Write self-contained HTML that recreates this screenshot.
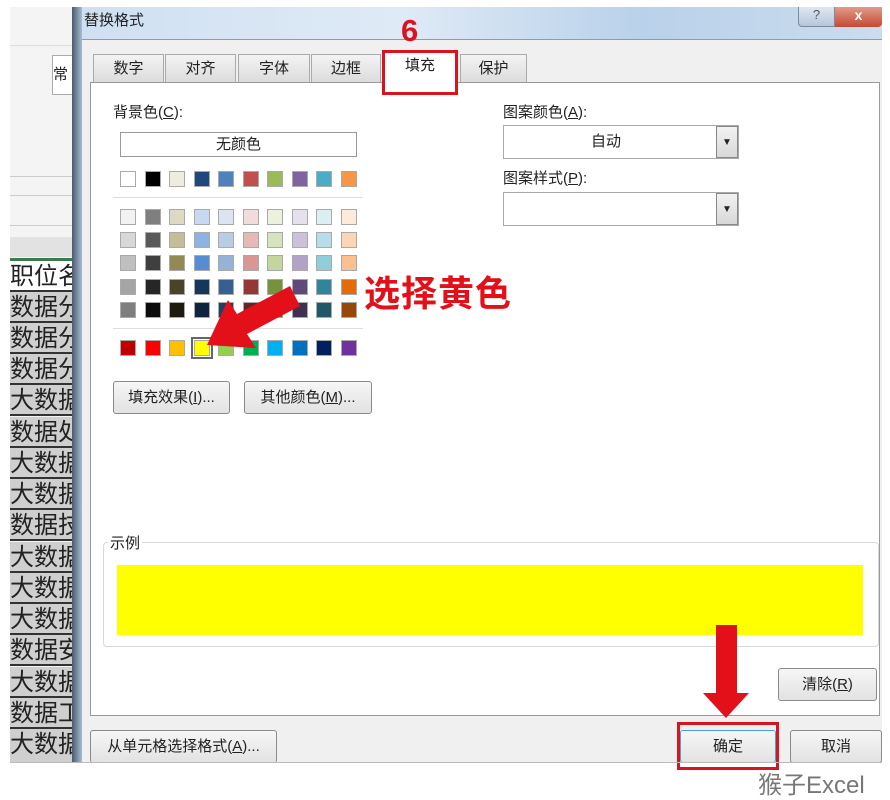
<!DOCTYPE html>
<html><head><meta charset="utf-8"><style>
*{margin:0;padding:0;box-sizing:border-box}
body{width:890px;height:799px;background:#fff;position:relative;overflow:hidden;font-family:"Liberation Sans","Noto Sans CJK SC",sans-serif;font-size:15px;color:#222}
.a{position:absolute}
.sw{position:absolute;width:16px;height:16px;border:1px solid #aaa}
.btn{position:absolute;border:1px solid #8a8a8a;border-radius:3px;background:linear-gradient(#f6f6f6,#e2e2e2);text-align:center;font-size:15px}
.tab{position:absolute;top:54px;height:28px;border:1px solid #aaa;border-bottom:none;background:linear-gradient(#f3f3f3,#dcdcdc);text-align:center;line-height:28px;font-size:15px}
.row{position:absolute;left:10px;width:62px;height:31px;font-size:24px;line-height:31px;overflow:hidden;white-space:nowrap;border-bottom:2px solid #333;background:#cfcfcf}
</style></head><body>
<div class="a" style="left:10px;top:7px;width:65px;height:755px;background:#f4f4f4"></div>
<div class="a" style="left:10px;top:45px;width:62px;height:1px;background:#ddd"></div>
<div class="a" style="left:52px;top:55px;width:22px;height:40px;border:1px solid #aaa;background:#fff;font-size:15px;line-height:38px">常</div>
<div class="a" style="left:10px;top:176px;width:62px;height:1px;background:#ccc"></div>
<div class="a" style="left:10px;top:195px;width:62px;height:1px;background:#ccc"></div>
<div class="a" style="left:10px;top:225px;width:62px;height:1px;background:#ccc"></div>
<div class="a" style="left:10px;top:237px;width:62px;height:20px;background:#e2e2e2"></div>
<div class="a" style="left:10px;top:258px;width:62px;height:3px;background:#3a7a50"></div>
<div class="row" style="top:261px;background:#fff">职位名</div>
<div class="row" style="top:292px">数据分</div>
<div class="row" style="top:323px">数据分</div>
<div class="row" style="top:354px">数据分</div>
<div class="row" style="top:385px">大数据</div>
<div class="row" style="top:417px">数据处</div>
<div class="row" style="top:448px">大数据</div>
<div class="row" style="top:479px">大数据</div>
<div class="row" style="top:510px">数据技</div>
<div class="row" style="top:542px">大数据</div>
<div class="row" style="top:573px">大数据</div>
<div class="row" style="top:604px">大数据</div>
<div class="row" style="top:635px">数据安</div>
<div class="row" style="top:667px">大数据</div>
<div class="row" style="top:698px">数据工</div>
<div class="row" style="top:729px;height:33px;border:none">大数据</div>
<div class="a" style="left:72px;top:7px;width:10px;height:755px;background:linear-gradient(90deg,#4a5a6e,#a9bcd2)"></div>
<div class="a" style="left:82px;top:7px;width:800px;height:32px;background:linear-gradient(90deg,#cfe0f2,#dfeaf6 40%,#b9d1ea 70%,#cbdcee)"></div>
<div class="a" style="left:84px;top:9px;font-size:15px">替换格式</div>
<div class="a" style="left:798px;top:7px;width:37px;height:20px;border:1px solid #7a8aa0;border-top:none;border-radius:0 0 0 4px;background:linear-gradient(#dfe7f1,#b6c6da);text-align:center;font-size:13px;color:#555">?</div>
<div class="a" style="left:835px;top:7px;width:47px;height:20px;background:linear-gradient(#e39a8a,#c24a34);border-radius:0 0 4px 0;text-align:center;color:#fff;font-size:14px;font-weight:bold">x</div>
<div class="a" style="left:82px;top:39px;width:800px;height:723px;background:#f0f0f0;border-top:1px solid #999"></div>
<div class="a" style="left:90px;top:82px;width:790px;height:634px;background:#fff;border:1px solid #999"></div>
<div class="tab" style="left:93px;width:71px">数字</div>
<div class="tab" style="left:165px;width:71px">对齐</div>
<div class="tab" style="left:238px;width:72px">字体</div>
<div class="tab" style="left:311px;width:70px">边框</div>
<div class="tab" style="left:383px;width:74px;top:50px;height:33px;background:#fff;line-height:30px">填充</div>
<div class="tab" style="left:460px;width:67px">保护</div>
<div class="a" style="left:382px;top:50px;width:76px;height:45px;border:3px solid #d9141f"></div>
<div class="a" style="left:401px;top:13px;font-size:31px;font-weight:bold;color:#d9141f">6</div>
<div class="a" style="left:113px;top:101px">背景色(<u>C</u>):</div>
<div class="a" style="left:120px;top:132px;width:237px;height:25px;border:1px solid #999;text-align:center;line-height:23px">无颜色</div>
<div class="a" style="left:113px;top:197px;width:250px;height:1px;background:#ddd"></div>
<div class="a" style="left:113px;top:328px;width:250px;height:1px;background:#ddd"></div>
<div id="g"></div>
<div class="btn" style="left:113px;top:381px;width:117px;height:33px;line-height:31px">填充效果(<u>I</u>)...</div>
<div class="btn" style="left:244px;top:381px;width:128px;height:33px;line-height:31px">其他颜色(<u>M</u>)...</div>
<div class="a" style="left:503px;top:101px">图案颜色(<u>A</u>):</div>
<div class="a" style="left:503px;top:125px;width:236px;height:34px;border:1px solid #aaa;background:#fff;line-height:32px;text-align:center;padding-right:30px">自动</div>
<div class="a" style="left:716px;top:126px;width:22px;height:32px;border:1px solid #888;background:linear-gradient(#f2f2f2,#d8d8d8);text-align:center;line-height:32px;font-size:10px">▼</div>
<div class="a" style="left:503px;top:167px">图案样式(<u>P</u>):</div>
<div class="a" style="left:503px;top:192px;width:236px;height:34px;border:1px solid #aaa;background:#fff"></div>
<div class="a" style="left:716px;top:193px;width:22px;height:32px;border:1px solid #888;background:linear-gradient(#f2f2f2,#d8d8d8);text-align:center;line-height:32px;font-size:10px">▼</div>
<div class="a" style="left:364px;top:265px;font-size:36px;font-weight:bold;color:#e3101a;letter-spacing:1px">选择黄色</div>
<div class="a" style="left:103px;top:542px;width:776px;height:105px;border:1px solid #d8d8d8;border-radius:4px"></div>
<div class="a" style="left:108px;top:532px;background:#fff;padding:0 2px">示例</div>
<div class="a" style="left:117px;top:565px;width:746px;height:70px;background:#ffff00"></div>
<div class="btn" style="left:778px;top:668px;width:99px;height:33px;line-height:31px">清除(<u>R</u>)</div>
<div class="btn" style="left:90px;top:730px;width:187px;height:33px;line-height:31px;border-bottom:none">从单元格选择格式(<u>A</u>)...</div>
<div class="btn" style="left:680px;top:730px;width:96px;height:33px;line-height:31px;border-color:#4aa3d8">确定</div>
<div class="btn" style="left:790px;top:730px;width:92px;height:33px;line-height:31px">取消</div>
<div class="a" style="left:677px;top:722px;width:102px;height:48px;border:3px solid #d9141f"></div>
<div class="a" style="left:10px;top:762px;width:872px;height:1px;background:#bbb"></div>
<div class="a" style="left:758px;top:765px;font-size:24px;color:#777">猴子Excel</div>
<svg class="a" style="left:0;top:0" width="890" height="799">
<polygon points="207,345 228,300 237,314 290,286 300,306 247,334 256,348" fill="#e3101a"/>
<polygon points="716,625 737,625 737,693 749,693 726,718 703,693 716,693" fill="#e3101a"/>
</svg>
<script>
var rows=[["FFFFFF","000000","EEECE1","1F497D","4F81BD","C0504D","9BBB59","8064A2","4BACC6","F79646"],
["F2F2F2","7F7F7F","DDD9C3","C6D9F0","DBE5F1","F2DCDB","EBF1DD","E5E0EC","DBEEF3","FDEADA"],
["D8D8D8","595959","C4BD97","8DB3E2","B8CCE4","E5B9B7","D7E3BC","CCC1D9","B7DDE8","FBD5B5"],
["BFBFBF","3F3F3F","938953","548DD4","95B3D7","D99694","C3D69B","B2A2C7","92CDDC","FAC08F"],
["A5A5A5","262626","494429","17365D","366092","953734","76923C","5F497A","31859B","E36C09"],
["7F7F7F","0C0C0C","1D1B10","0F243E","244061","632423","4F6128","3F3151","205867","974806"],
["C00000","FF0000","FFC000","FFFF00","92D050","00B050","00B0F0","0070C0","002060","7030A0"]];
var ys=[171,209,232,255,279,302,340],h="";
rows.forEach(function(r,i){r.forEach(function(c,j){var x=120+j*24.5;var ex=(i==6&&j==3)?"outline:2px solid #666;outline-offset:1px;":"";h+='<div class="sw" style="left:'+x+'px;top:'+ys[i]+'px;background:#'+c+';'+ex+'"></div>';});});
document.getElementById("g").innerHTML=h;
</script>
</body></html>
